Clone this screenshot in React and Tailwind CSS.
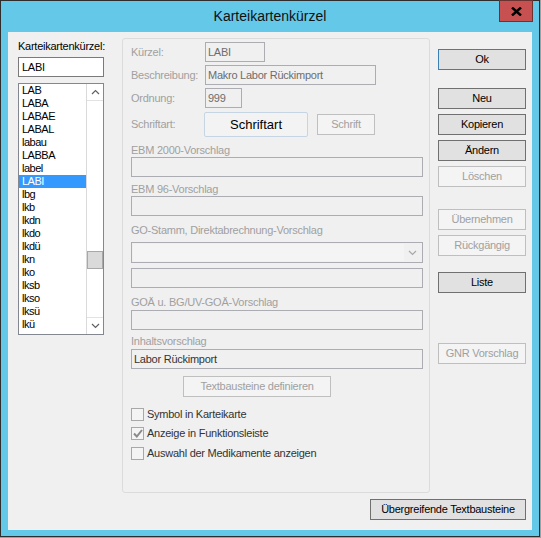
import React from 'react';

const entries = ['LAB', 'LABA', 'LABAE', 'LABAL', 'labau', 'LABBA', 'label', 'LABI', 'lbg', 'lkb', 'lkdn', 'lkdo', 'lkdü', 'lkn', 'lko', 'lksb', 'lkso', 'lksü', 'lkü'];

const Chevron = ({ up, color = '#606060' }) => (
    <svg width="9" height="6" viewBox="0 0 9 6">
        <polyline
            points={up ? '1,5 4.5,1.5 8,5' : '1,1 4.5,4.5 8,1'}
            fill="none"
            stroke={color}
            strokeWidth="1.2"
        />
    </svg>
);

const Button = ({ children, width = 'w-[88px]', disabled, primary, className = '' }) => {
    let look = 'bg-[#E1E1E1] border-[#707070] text-black';
    if (disabled) look = 'bg-[#F4F4F4] border-[#BFBFBF] text-[#A0A0A0]';
    if (primary) look = 'bg-[#E1E1E1] border-[#3C7FB1] text-black';
    return (
        <div className={`${width} h-[21px] border ${look} flex items-center justify-center text-[11px] leading-none ${className}`}>
            {children}
        </div>
    );
};

const Field = ({ width, children, dark }) => (
    <div className={`${width} h-[20px] border border-[#ABADB3] bg-[#F0F0F0] px-[2px] leading-[18px] ${dark ? 'text-[#333333]' : 'text-[#6D6D6D]'}`}>
        {children}
    </div>
);

const Caption = ({ children, className = '' }) => (
    <div className={`h-[13px] leading-[13px] text-[#A0A0A0] ${className}`}>{children}</div>
);

const Check = ({ checked, label, className = '' }) => (
    <div className={`flex items-center h-[13px] ${className}`}>
        <div className="w-[13px] h-[13px] border border-[#A8A8A8] bg-[#F4F4F4] flex items-center justify-center">
            {checked && (
                <svg width="10" height="9" viewBox="0 0 10 9">
                    <polyline points="1,4.5 3.8,7.5 9,1" fill="none" stroke="#8A8A8A" strokeWidth="2" />
                </svg>
            )}
        </div>
        <span className="ml-[3px] text-[#333333]">{label}</span>
    </div>
);

const App = () => {
    return (
        <div className="w-[541px] h-[538px] bg-[#A0A0A0] font-['Liberation_Sans',Arial,sans-serif] text-[11px] tracking-[-0.25px]">
            <div className="w-[540px] h-[537px] border border-[#2E2E2E] bg-[#64C8E9] flex flex-col">
                <div className="h-[31px] shrink-0 relative flex items-center justify-center pb-[1px]">
                    <span className="text-[14px] tracking-normal text-[#111111]">Karteikartenkürzel</span>
                    <div className="absolute right-[6px] top-[-1px] w-[34px] h-[22px] bg-[#C75050] border border-[#6B3232] flex items-center justify-center">
                        <svg width="11" height="9" viewBox="0 0 11 9">
                            <path d="M1 0.5 L10 8.5 M10 0.5 L1 8.5" stroke="#000" strokeWidth="2.4" />
                        </svg>
                    </div>
                </div>

                <div className="ml-[7px] w-[524px] h-[498px] bg-[#F0F0F0] flex flex-col">
                    <div className="flex items-start pl-[10px]">
                        {/* linke Spalte */}
                        <div className="w-[86px] mt-[8px] flex flex-col">
                            <div className="h-[13px] leading-[13px] text-black">Karteikartenkürzel:</div>
                            <div className="mt-[4px] h-[20px] border border-[#7A7A7A] bg-white px-[3px] leading-[18px] text-black">LABI</div>
                            <div className="mt-[6px] h-[252px] border border-[#828790] bg-white flex">
                                <div className="w-[67px] overflow-hidden text-black tracking-[-0.5px]">
                                    {entries.map((e) => (
                                        <div
                                            key={e}
                                            className={`h-[13px] leading-[13px] pl-[3px] ${e === 'LABI' ? 'bg-[#3399FF] text-white' : ''}`}
                                        >
                                            {e}
                                        </div>
                                    ))}
                                </div>
                                <div className="w-[17px] flex flex-col bg-white border-l border-[#DADADA]">
                                    <div className="h-[17px] border-b border-[#E2E2E2] flex items-center justify-center">
                                        <Chevron up />
                                    </div>
                                    <div className="h-[150px]" />
                                    <div className="h-[18px] bg-[#DADADA] border border-[#A8A8A8]" />
                                    <div className="flex-1" />
                                    <div className="h-[17px] border-t border-[#E2E2E2] flex items-center justify-center">
                                        <Chevron />
                                    </div>
                                </div>
                            </div>
                        </div>

                        {/* mittlere Gruppe */}
                        <div className="ml-[18px] mt-[6px] w-[308px] h-[455px] border border-[#DCDCDC] rounded-[3px] pl-[8px] flex flex-col">
                            <div className="mt-[3px] flex items-center">
                                <div className="w-[74px] text-[#A0A0A0]">Kürzel:</div>
                                <Field width="w-[60px]">LABI</Field>
                            </div>
                            <div className="mt-[3px] flex items-center">
                                <div className="w-[74px] text-[#A0A0A0]">Beschreibung:</div>
                                <Field width="w-[171px]">Makro Labor Rückimport</Field>
                            </div>
                            <div className="mt-[3px] flex items-center">
                                <div className="w-[74px] text-[#A0A0A0]">Ordnung:</div>
                                <Field width="w-[37px]">999</Field>
                            </div>
                            <div className="mt-[4px] flex items-center h-[25px]">
                                <div className="w-[73px] text-[#A0A0A0]">Schriftart:</div>
                                <div className="w-[104px] h-[25px] border border-[#C5D5E4] bg-[#F3F3F3] rounded-[2px] flex items-center justify-center text-[13px] tracking-normal text-black">
                                    Schriftart
                                </div>
                                <Button width="w-[58px]" disabled className="ml-[9px] h-[20px]">Schrift</Button>
                            </div>

                            <Caption className="mt-[7px]">EBM 2000-Vorschlag</Caption>
                            <Field width="w-[292px]" />

                            <Caption className="mt-[6px]">EBM 96-Vorschlag</Caption>
                            <Field width="w-[292px]" />

                            <Caption className="mt-[8px]">GO-Stamm, Direktabrechnung-Vorschlag</Caption>
                            <div className="mt-[5px] w-[292px] h-[21px] border border-[#ABADB3] bg-[#F0F0F0] flex items-center p-[1px]">
                                <div className="flex-1 h-full bg-[#F4F4F4]" />
                                <div className="w-[17px] flex items-center justify-center">
                                    <Chevron color="#A8A8A8" />
                                </div>
                            </div>
                            <div className="mt-[5px]">
                                <Field width="w-[292px]" />
                            </div>

                            <Caption className="mt-[8px]">GOÄ u. BG/UV-GOÄ-Vorschlag</Caption>
                            <div className="mt-[1px]">
                                <Field width="w-[292px]" />
                            </div>

                            <Caption className="mt-[5px]">Inhaltsvorschlag</Caption>
                            <div className="mt-[1px]">
                                <Field width="w-[292px]" dark>Labor Rückimport</Field>
                            </div>

                            <Button width="w-[148px]" disabled className="mt-[7px] ml-[52px]">Textbausteine definieren</Button>

                            <Check className="mt-[11px]" label="Symbol in Karteikarte" />
                            <Check className="mt-[6px]" checked label="Anzeige in Funktionsleiste" />
                            <Check className="mt-[7px]" label="Auswahl der Medikamente anzeigen" />
                        </div>

                        {/* rechte Spalte */}
                        <div className="ml-[8px] mt-[17px] flex flex-col">
                            <Button primary>Ok</Button>
                            <Button className="mt-[18px]">Neu</Button>
                            <Button className="mt-[5px]">Kopieren</Button>
                            <Button className="mt-[5px]">Ändern</Button>
                            <Button className="mt-[5px]" disabled>Löschen</Button>
                            <Button className="mt-[22px]" disabled>Übernehmen</Button>
                            <Button className="mt-[5px]" disabled>Rückgängig</Button>
                            <Button className="mt-[16px]">Liste</Button>
                            <Button className="mt-[50px]" disabled>GNR Vorschlag</Button>
                        </div>
                    </div>

                    <div className="mt-[6px] flex justify-end pr-[6px]">
                        <Button width="w-[156px]">Übergreifende Textbausteine</Button>
                    </div>
                </div>
            </div>
        </div>
    );
};

export default App;
